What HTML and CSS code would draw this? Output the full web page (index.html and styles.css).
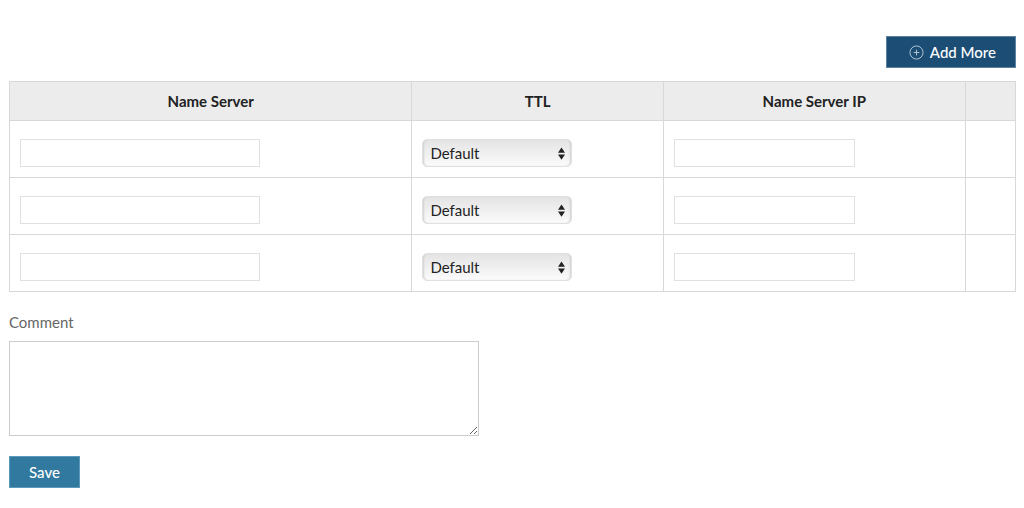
FILE: index.html
```html
<!DOCTYPE html>
<html lang="en">
	<head>
		<meta charset="UTF-8">
		<meta name="viewport" content="width=device-width, initial-scale=1">
		<title>Name Servers</title>
		<link rel="stylesheet" href="styles.css">
	</head>
	<body>
		<form class="ns-form">
			<div class="toolbar">
				<button type="button" class="button button-add">
					<svg class="icon-plus" viewBox="0 0 16 16" aria-hidden="true">
						<circle cx="8" cy="8" r="7"/>
						<path d="M8 5v6M5 8h6"/>
					</svg>
					Add More
				</button>
			</div>

			<table class="ns-table">
				<thead>
					<tr>
						<th class="col-server" id="h-server">Name Server</th>
						<th class="col-ttl" id="h-ttl">TTL</th>
						<th class="col-ip" id="h-ip">Name Server IP</th>
						<th class="col-action"></th>
					</tr>
				</thead>
				<tbody>
					<tr>
						<td><input type="text" class="text-server" name="server1" aria-labelledby="h-server"></td>
						<td>
							<div class="select-box">
								<select name="ttl1" aria-labelledby="h-ttl"><option>Default</option></select>
								<svg class="icon-arrows" viewBox="0 0 8 14" aria-hidden="true"><path d="M4 0l4 6H0zM4 14l4-6H0z"/></svg>
							</div>
						</td>
						<td><input type="text" class="text-ip" name="ip1" aria-labelledby="h-ip"></td>
						<td></td>
					</tr>
					<tr>
						<td><input type="text" class="text-server" name="server2" aria-labelledby="h-server"></td>
						<td>
							<div class="select-box">
								<select name="ttl2" aria-labelledby="h-ttl"><option>Default</option></select>
								<svg class="icon-arrows" viewBox="0 0 8 14" aria-hidden="true"><path d="M4 0l4 6H0zM4 14l4-6H0z"/></svg>
							</div>
						</td>
						<td><input type="text" class="text-ip" name="ip2" aria-labelledby="h-ip"></td>
						<td></td>
					</tr>
					<tr>
						<td><input type="text" class="text-server" name="server3" aria-labelledby="h-server"></td>
						<td>
							<div class="select-box">
								<select name="ttl3" aria-labelledby="h-ttl"><option>Default</option></select>
								<svg class="icon-arrows" viewBox="0 0 8 14" aria-hidden="true"><path d="M4 0l4 6H0zM4 14l4-6H0z"/></svg>
							</div>
						</td>
						<td><input type="text" class="text-ip" name="ip3" aria-labelledby="h-ip"></td>
						<td></td>
					</tr>
				</tbody>
			</table>

			<label class="comment-label" for="comment">Comment</label>
			<textarea class="comment" id="comment" name="comment" rows="4"></textarea>

			<button type="button" class="button button-save">Save</button>
		</form>
	</body>
</html>
```

FILE: styles.css
```css
* {
	box-sizing: border-box;
}

body {
	margin: 0;
	background-color: #fff;
	color: #222;
	font-family: Lato, "Liberation Sans", sans-serif;
	font-size: 15px;
	line-height: 20px;
}

button, input, select, textarea {
	font: inherit;
	color: inherit;
}

.ns-form {
	padding: 36px 8px 20px 9px;
}

.toolbar {
	display: flex;
	justify-content: flex-end;
	margin-bottom: 13px;
}

.button {
	display: flex;
	align-items: center;
	height: 32px;
	padding: 0 19px;
	border: 1px solid #5c9abb;
	color: #fff;
	font-weight: 500;
	cursor: pointer;
}

.button-add {
	gap: 6px;
	padding-left: 22px;
	border-color: #5b83a2;
	background-color: #1c4e75;
}

.button-save {
	background-color: #31799f;
}

.icon-plus {
	width: 15px;
	height: 15px;
	fill: none;
	stroke: #b9cbd9;
	stroke-width: 1;
}

/* name server rows */
.ns-table {
	width: 100%;
	table-layout: fixed;
	border-collapse: collapse;
}

.ns-table th, .ns-table td {
	border: 1px solid #d8d8d8;
}

.ns-table th {
	height: 39px;
	padding: 0;
	background-color: #ececec;
	font-weight: bold;
}

.ns-table td {
	padding: 18px 10px 10px;
}

.col-server {
	width: 40%;
}

.col-ttl {
	width: 25%;
}

.col-ip {
	width: 30%;
}

.col-action {
	width: 5%;
}

.ns-table input {
	display: block;
	max-width: 100%;
	height: 28px;
	padding: 0 6px;
	border: 1px solid #e0e0e0;
	background-color: #fff;
}

.text-server {
	width: 240px;
}

.text-ip {
	width: 181px;
}

/* the arrows share one grid cell with the select */
.select-box {
	display: grid;
	align-items: center;
	width: 150px;
	max-width: 100%;
}

.select-box select {
	grid-area: 1 / 1;
	appearance: none;
	width: 100%;
	height: 28px;
	padding: 0 24px 0 7px;
	border: 1px solid #e0e0e0;
	border-radius: 5px;
	background: linear-gradient(#e4e4e4, #fbfbfb);
	box-shadow: inset 2px 0 2px -1px #d0d0d0, inset -2px 0 2px -1px #d0d0d0;
}

.icon-arrows {
	grid-area: 1 / 1;
	justify-self: end;
	width: 7px;
	height: 13px;
	margin-right: 7px;
	fill: #222;
	pointer-events: none;
}

.comment-label {
	display: block;
	margin: 20px 0 9px;
	color: #666;
}

.comment {
	display: block;
	width: 470px;
	max-width: 100%;
	height: 95px;
	margin-bottom: 20px;
	padding: 6px;
	border: 1px solid #ccc;
	resize: both;
}
```
